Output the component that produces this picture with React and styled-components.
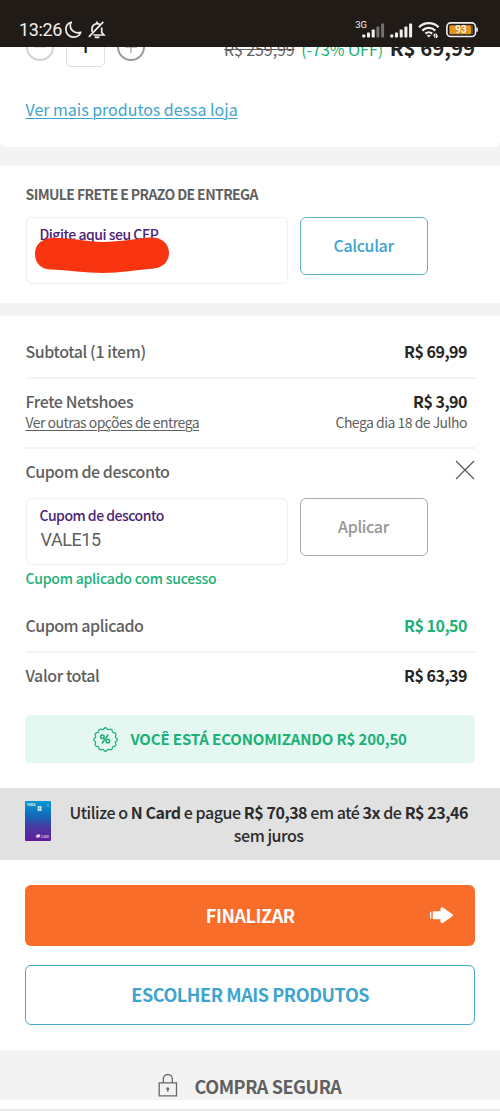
import styled, { createGlobalStyle } from 'styled-components';

const GlobalStyle = createGlobalStyle`
  * {
    box-sizing: border-box;
  }

  body {
    margin: 0;
    background: #f3f3f3;
    font-family: "Noto Sans CJK SC", "Noto Sans", sans-serif;
    color: #5f5f5f;
  }
`;

const Page = styled.div`
  width: 500px;
  height: 1111px;
  overflow: hidden;
  background: #f3f3f3;
  display: flex;
  flex-direction: column;
`;

const StatusBar = styled.header`
  height: 47px;
  flex: none;
  background: #211b18;
  padding: 13px 21px 0 19px;
  display: flex;
  justify-content: space-between;
  color: #f1efee;
`;

const StatusGroup = styled.div`
  display: flex;
  align-items: center;
  height: 34px;
`;

const Clock = styled.span`
  font: 400 18px/34px Roboto, sans-serif;
  letter-spacing: -0.35px;
  width: 46px;
  white-space: nowrap;
`;

// every label sets its own size, weight and tracking
const Text = styled.span`
  display: block;
  white-space: nowrap;
  font-size: ${(p) => p.$size || 16}px;
  line-height: ${(p) => p.$line || 22}px;
  font-weight: ${(p) => p.$weight || 500};
  letter-spacing: ${(p) => p.$track ?? -0.42}px;
  color: ${(p) => p.$color || '#5f5f5f'};
`;

const Link = styled(Text).attrs({ as: 'a' })`
  text-decoration: underline;
  text-decoration-thickness: 1px;
  text-underline-offset: 2px;
`;

const OldPrice = styled(Text)`
  text-decoration: line-through;
  text-decoration-thickness: 1px;
`;

const ProductCard = styled.section`
  height: 100px;
  flex: none;
  overflow: hidden;
  background: #fff;
  border-radius: 0 0 6px 6px;
  padding: 0 25px 0 25.5px;
`;

const ProductRow = styled.div`
  display: flex;
  justify-content: space-between;
  margin-top: -20px;
  height: 40px;
`;

const Quantity = styled.div`
  display: flex;
  align-items: center;
  gap: 12px;
`;

const RoundButton = styled.span`
  width: 28px;
  height: 28px;
  border: 2px solid ${(p) => p.$color};
  border-radius: 50%;
  display: flex;
  align-items: center;
  justify-content: center;
`;

const QuantityBox = styled.span`
  width: 39px;
  height: 40px;
  border: 1px solid #dedede;
  border-radius: 5px;
  text-align: center;
  font: 500 17px/38px Roboto, sans-serif;
  color: #111;
`;

const Prices = styled.div`
  display: flex;
  align-items: baseline;
  gap: 6.5px;
`;

const StoreLink = styled.div`
  padding-top: 31px;
`;

const Panel = styled.section`
  flex: none;
  background: #fff;
  height: ${(p) => p.$height}px;
  margin-top: ${(p) => p.$gap}px;
`;

const Shipping = styled.div`
  padding: 17px 25px 0 25.5px;
`;

const Form = styled.div`
  display: flex;
  align-items: flex-start;
  gap: 12px;
  margin-top: ${(p) => p.$top}px;
`;

const Field = styled.div`
  position: relative;
  width: 262px;
  height: 67px;
  border: 1px solid #eeeeee;
  border-radius: 6px;
  padding: 6px 13px;
`;

const FieldValue = styled.span`
  display: block;
  font: 400 18px/24px Roboto, sans-serif;
  letter-spacing: -0.4px;
  margin: 3px 0 0 1px;
  color: #5f5f5f;
`;

// marker stroke over the typed postal code
const Marker = styled.svg`
  position: absolute;
  left: 7px;
  top: 18px;
`;

const SmallButton = styled.button`
  width: 128px;
  height: 58px;
  padding: 0 0 2px;
  background: #fff;
  border: 1px solid ${(p) => p.$border};
  border-radius: 6px;
  font: 500 16px/24px "Noto Sans CJK SC", sans-serif;
  letter-spacing: -0.35px;
  color: ${(p) => p.$color};
`;

const SummaryRow = styled.div`
  margin: 0 25px 0 25.5px;
  padding: ${(p) => p.$top}px 8px 15px 0;
  border-bottom: ${(p) => (p.$last ? 0 : 2)}px solid #f3f3f3;
`;

const Line = styled.div`
  display: flex;
  justify-content: space-between;
`;

const Coupon = styled.div`
  padding: 11px 25px 0 25.5px;
`;

const Savings = styled.div`
  margin: 14px 25px 0 25.4px;
  height: 48px;
  border-radius: 5px;
  background: #e5f7f1;
  display: flex;
  align-items: center;
  padding: 0 0 0 68px;
  gap: 12px;

  ${Text} {
    margin-top: -1px;
  }
`;

const CardBanner = styled.div`
  margin-top: 25px;
  height: 72px;
  background: #e1e1e1;
  display: flex;
  padding: 13px 32.5px 0 25.4px;
`;

const BannerText = styled.p`
  margin: 0 0 0 18px;
  flex: 1;
  text-align: center;
  white-space: nowrap;
  font-size: 16px;
  line-height: 23px;
  font-weight: 500;
  letter-spacing: -0.45px;
  color: #2b2b2b;
`;

const Actions = styled.div`
  padding: 25px 25px 0 25.4px;
  display: flex;
  flex-direction: column;
  gap: 19px;
`;

const BigButton = styled.button`
  height: ${(p) => (p.$primary ? 61 : 60)}px;
  padding: 0;
  border: ${(p) => (p.$primary ? '0' : '1px solid #4aa7cf')};
  border-radius: 6px;
  background: ${(p) => (p.$primary ? '#f96d2b' : '#fff')};
  display: grid;
  grid-template-columns: 45px 1fr 45px;
  align-items: center;
  font-family: inherit;

  ${Text} {
    margin-top: -2px;
  }
`;

const Secure = styled.div`
  height: 50px;
  flex: none;
  display: flex;
  padding: 23px 0 0 158px;
  gap: 16.5px;
`;

const BottomEdge = styled.div`
  height: 11px;
  flex: none;
  background: #fff;
  border-bottom: 2px solid #e8e8e8;
`;

const Moon = () => (
  <svg width="18" height="18" viewBox="0 0 18 18" fill="none" stroke="#f1efee" strokeWidth="1.7" strokeLinejoin="round">
    <path d="M6.3 1.2C2.9 2.1.9 5 .9 8.400c0 4.400 3.400 7.800 7.700 7.800 3.400 0 6.100-1.800 7.200-4.900-1 .4-1.900.5-2.800.5-4.500 0-7.800-3.200-7.800-7.300 0-1.200.3-2.300 1.100-3.300Z" />
  </svg>
);

const BellOff = () => (
  <svg width="18" height="19" viewBox="0 0 18 19" fill="none" stroke="#f1efee" strokeWidth="1.7">
    <path d="M4 10.800V7.600a4.900 4.900 0 0 1 8.100-3.700M13.700 6.500v5l2.200 2.500H5.400M.9 15.800 15.300.8" />
    <path d="M8.900.6v2" />
    <path d="M6.800 16.300h4.600" strokeWidth="1.900" />
  </svg>
);

const Signal = ({ strong }) => (
  <svg width="23" height="15" viewBox="0 0 23 15">
    {[3, 5, 8, 11, 14].map((h, i) => (
      <rect key={h} x={0.3 + i * 4.7} y={14.5 - h} width="3" height={h} rx="0.7" fill={i < strong ? '#f1efee' : '#76716f'} />
    ))}
  </svg>
);

const Wifi = () => (
  <svg width="22" height="18" viewBox="0 0 22 18" fill="none" stroke="#f1efee" strokeWidth="2.3">
    <path d="M1 6.200a14 14 0 0 1 19.600 0M4.300 9.600a9.200 9.200 0 0 1 13 0M7.400 12.700a5 5 0 0 1 6.800 0" />
    <path d="m8.600 14 2.200 2.600L13 14Z" fill="#f1efee" stroke="none" />
    <path d="m15.400 14.600 1.400-1.400v3.500M19.900 14.800l-1.400 1.400v-3.500" strokeWidth="1.200" />
  </svg>
);

const Battery = () => (
  <svg width="33" height="16" viewBox="0 0 33 16">
    <rect x="0.9" y="0.9" width="28.6" height="13.6" rx="3.8" fill="none" stroke="#f1efee" strokeWidth="1.6" />
    <rect x="3.4" y="3.2" width="21.6" height="9" rx="1" fill="#e2951f" />
    <rect x="25" y="3.2" width="2" height="9" fill="#604b2b" />
    <path d="M31 5.700v4" stroke="#f1efee" strokeWidth="1.6" />
    <text x="15" y="11.400" textAnchor="middle" fontFamily="Roboto, sans-serif" fontSize="10" fontWeight="500" fill="#fff">93</text>
  </svg>
);

const NetworkLabel = styled.span`
  font: 400 9.5px/10px Roboto, sans-serif;
  align-self: flex-start;
  margin-top: 7px;
  margin-right: -5px;
`;

const Spacer = styled.span`
  width: ${(p) => p.$w}px;
`;

const SignalSlot = styled.span`
  display: flex;
  margin-top: 1px;
`;

const DiscountBadge = () => {
  // 12 scallops round the rim
  const points = Array.from({ length: 72 }, (_, i) => {
    const a = (i / 72) * Math.PI * 2 - Math.PI / 2;
    const r = 11 + 0.85 * Math.cos(a * 12 + Math.PI * 6);
    return `${(12.5 + r * Math.cos(a)).toFixed(2)},${(12.5 + r * Math.sin(a)).toFixed(2)}`;
  }).join(' ');
  return (
    <svg width="25" height="25" viewBox="0 0 25 25" fill="none" stroke="#1bb077">
      <polygon points={points} strokeWidth="1.2" strokeLinejoin="round" />
      <g strokeWidth="1.5">
        <circle cx="9.3" cy="9.8" r="1.8" />
        <circle cx="14.9" cy="14" r="1.8" />
        <path d="m15.300 7.500-6.400 9" />
      </g>
    </svg>
  );
};

const CardSvg = styled.svg`
  flex: none;
`;

const CreditCard = () => (
  <CardSvg width="26" height="40" viewBox="0 0 26 40">
    <defs>
      <linearGradient id="card" x1="0" y1="0" x2="0" y2="1">
        <stop offset="0" stopColor="#0999d0" />
        <stop offset="0.38" stopColor="#1268b7" />
        <stop offset="0.6" stopColor="#4240a4" />
        <stop offset="1" stopColor="#64199a" />
      </linearGradient>
    </defs>
    <rect width="26" height="40" rx="1" fill="url(#card)" />
    <text x="2" y="4.8" fontFamily="Roboto, sans-serif" fontSize="3.8" fontWeight="700" fill="#d6f2fb">VISA</text>
    <rect x="12.6" y="5" width="4" height="5" rx="0.7" fill="#d1e6f2" />
    <path d="M13 7.200h3.200M14.600 5.300v4.300" stroke="#5f9bc5" strokeWidth="0.5" />
    <path d="M22 3.700v1.800M23.200 3.300v2.500" stroke="#7bc8e7" strokeWidth="0.6" />
    <path d="m10.800 36.600 1-3.200h3.600l-1 3.200Z" fill="#ece4f5" />
    <text x="15.8" y="36.6" fontFamily="Roboto, sans-serif" fontSize="3.2" fontWeight="700" fill="#cbb6df">CARD</text>
  </CardSvg>
);

const Arrow = () => (
  <svg width="24" height="17" viewBox="0 0 24 17">
    <path d="M.7 4.800v7" stroke="#fff" strokeWidth="1.2" />
    <path d="M3.600 4.200h6.900V2c0-1.500 1.500-2.200 2.800-1.300l9.100 6.500c.9.6.9 1.500 0 2.100l-9.100 6.500c-1.300.9-2.800.2-2.800-1.300v-2.200H3.600c-.6 0-.9-.3-.9-.9V5.100c0-.6.3-.9.9-.9Z" fill="#fff" />
  </svg>
);

const Lock = () => (
  <svg width="20" height="25" viewBox="0 0 20 25" fill="none" stroke="#686868" strokeWidth="1.3">
    <path d="M1.200 9.800h17.300v13H1.200zM5.300 9.800V6a4.500 4.500 0 0 1 9 0v3.800" />
    <circle cx="9.8" cy="15.7" r="1.5" fill="#686868" stroke="none" />
    <path d="M9.800 16v2.700" />
  </svg>
);

const BLUE = '#3fa3d0';
const GREEN = '#1bb077';
const PURPLE = '#4b2474';
const DARK = '#252525';

const App = () => (
  <>
    <GlobalStyle />
    <Page>
      <StatusBar>
        <StatusGroup>
          <Clock>13:26</Clock>
          <Moon />
          <Spacer $w={5} />
          <BellOff />
        </StatusGroup>
        <StatusGroup>
          <NetworkLabel>3G</NetworkLabel>
          <SignalSlot><Signal strong={3} /></SignalSlot>
          <Spacer $w={5} />
          <SignalSlot><Signal strong={5} /></SignalSlot>
          <Spacer $w={5} />
          <Wifi />
          <Spacer $w={6} />
          <Battery />
        </StatusGroup>
      </StatusBar>

      <ProductCard>
        <ProductRow>
          <Quantity>
            <RoundButton $color="#d2d2d2">
              <svg width="12" height="12" stroke="#ccc"><path d="M0 6h12" /></svg>
            </RoundButton>
            <QuantityBox>1</QuantityBox>
            <RoundButton $color="#9b9b9b">
              <svg width="12" height="12" stroke="#8a8a8a"><path d="M0 6h12M6 0v12" /></svg>
            </RoundButton>
          </Quantity>
          <Prices>
            <OldPrice $weight={400} $line={40} $track={-0.08}>R$ 259,99</OldPrice>
            <Text $weight={400} $line={40} $track={0} $color={GREEN}>(-73% OFF)</Text>
            <Text $size={20.5} $weight={700} $line={40} $track={-0.05} $color={DARK}>R$ 69,99</Text>
          </Prices>
        </ProductRow>
        <StoreLink>
          <Link $weight={400} $track={-0.02} $color={BLUE}>Ver mais produtos dessa loja</Link>
        </StoreLink>
      </ProductCard>

      <Panel $height={137} $gap={19}>
        <Shipping>
          <Text $size={14} $weight={700} $track={-0.6}>SIMULE FRETE E PRAZO DE ENTREGA</Text>
          <Form $top={12}>
            <Field>
              <Text $size={14} $line={20} $track={-0.48} $color={PURPLE}>Digite aqui seu CEP</Text>
              <Marker width="138" height="38" viewBox="0 0 138 38">
                <path d="M17 2C34 1 50 6 69 6 86 6 104 2 116 1.500c10-1 18.500 5 19 14.500C135.500 25 129 31.500 120 32.500 103 34 86 37 69 37 52 37 33 34 16 33.500 7 33 1 27 1 18 1 9 7 3 17 2Z" fill="#f83510" />
              </Marker>
            </Field>
            <SmallButton $border="#62b0d2" $color={BLUE}>Calcular</SmallButton>
          </Form>
        </Shipping>
      </Panel>

      <Panel $height={734} $gap={13}>
        <SummaryRow $top={24}>
          <Line>
            <Text>Subtotal (1 item)</Text>
            <Text $weight={700} $track={-0.5} $color={DARK}>R$ 69,99</Text>
          </Line>
        </SummaryRow>
        <SummaryRow $top={11}>
          <Line>
            <Text>Frete Netshoes</Text>
            <Text $weight={700} $track={-0.5} $color={DARK}>R$ 3,90</Text>
          </Line>
          <Line>
            <Link $size={14} $line={20} $weight={400} $track={-0.53}>Ver outras opções de entrega</Link>
            <Text $size={14} $line={20} $weight={400} $track={-0.52}>Chega dia 18 de Julho</Text>
          </Line>
        </SummaryRow>
        <Coupon>
          <Line>
            <Text $track={-0.46}>Cupom de desconto</Text>
            <svg width="20" height="20" stroke="#555" strokeWidth="1.1">
              <path d="m1 1 18 18M19 1 1 19" />
            </svg>
          </Line>
          <Form $top={16}>
            <Field>
              <Text $size={14} $line={20} $track={-0.5} $color={PURPLE}>Cupom de desconto</Text>
              <FieldValue>VALE15</FieldValue>
            </Field>
            <SmallButton $border="#aaaaaa" $color="#969696">Aplicar</SmallButton>
          </Form>
          <Form $top={3}>
            <Text $size={14} $line={20} $track={-0.2} $color={GREEN}>Cupom aplicado com sucesso</Text>
          </Form>
        </Coupon>
        <SummaryRow $top={26}>
          <Line>
            <Text $track={-0.47}>Cupom aplicado</Text>
            <Text $weight={700} $track={-0.5} $color={GREEN}>R$ 10,50</Text>
          </Line>
        </SummaryRow>
        <SummaryRow $top={11} $last>
          <Line>
            <Text>Valor total</Text>
            <Text $weight={700} $track={-0.5} $color={DARK}>R$ 63,39</Text>
          </Line>
        </SummaryRow>
        <Savings>
          <DiscountBadge />
          <Text $weight={700} $size={15} $track={-0.14} $color={GREEN}>VOCÊ ESTÁ ECONOMIZANDO R$ 200,50</Text>
        </Savings>
        <CardBanner>
          <CreditCard />
          <BannerText>
            Utilize o <b>N Card</b> e pague <b>R$ 70,38</b> em até <b>3x</b> de <b>R$ 23,46</b>
            <br />
            sem juros
          </BannerText>
        </CardBanner>
        <Actions>
          <BigButton $primary>
            <span />
            <Text $size={18} $weight={700} $color="#fff">FINALIZAR</Text>
            <Arrow />
          </BigButton>
          <BigButton>
            <span />
            <Text $size={18} $weight={700} $color={BLUE}>ESCOLHER MAIS PRODUTOS</Text>
            <span />
          </BigButton>
        </Actions>
      </Panel>

      <Secure>
        <Lock />
        <Text $size={18} $line={26} $weight={700}>COMPRA SEGURA</Text>
      </Secure>
      <BottomEdge />
    </Page>
  </>
);

export default App;
